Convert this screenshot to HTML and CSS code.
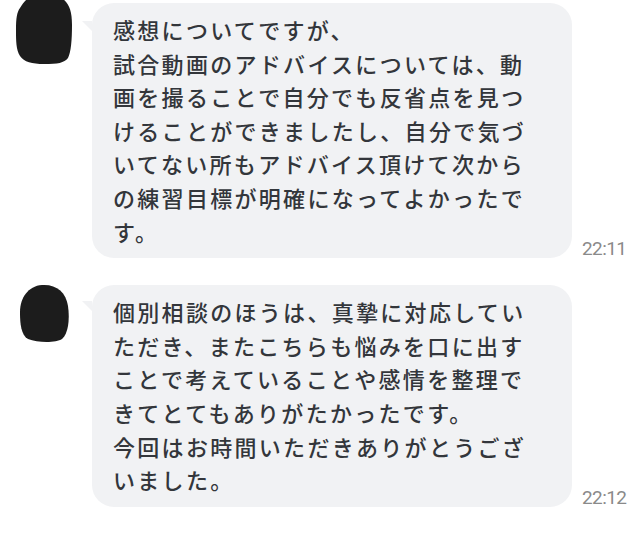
FILE: index.html
```html
<!DOCTYPE html>
<html lang="ja">
<head>
<meta charset="utf-8">
<link rel="stylesheet" href="styles.css">
</head>
<body>
<div class="chat">
  <div class="msg msg-first">
    <div class="avatar-col">
      <svg class="avatar avatar-1" width="60" height="66" viewBox="0 0 60 66">
        <path d="M14,-2 C22,-2 40,-2 48,-2 C55,4 58,10 58,25 C58,40 57,52 54,58 C50,63 44,64 30,64 C18,64 10,62 6,56 C2,50 2,40 2,30 C2,18 3,12 6,8 C9,3 12,0 14,-2 Z"/>
      </svg>
    </div>
    <div class="bubble bubble-first">感想についてですが、<br>試合動画のアドバイスについては、動<br>画を撮ることで自分でも反省点を見つ<br>けることができましたし、自分で気づ<br>いてない所もアドバイス頂けて次から<br>の練習目標が明確になってよかったで<br>す。</div>
    <div class="time">22:11</div>
  </div>
  <div class="msg msg-second">
    <div class="avatar-col">
      <svg class="avatar avatar-2" width="52" height="60" viewBox="0 0 52 60">
        <path d="M24,1 C38,0 48,8 50,22 C52,36 50,50 44,55 C38,59 20,59 10,55 C3,51 2,40 2,28 C2,14 10,2 24,1 Z"/>
      </svg>
    </div>
    <div class="bubble bubble-second">個別相談のほうは、真摯に対応してい<br>ただき、またこちらも悩みを口に出す<br>ことで考えていることや感情を整理で<br>きてとてもありがたかったです。<br>今回はお時間いただきありがとうござ<br>いました。</div>
    <div class="time">22:12</div>
  </div>
</div>
</body>
</html>
```
FILE: styles.css
```css
html, body {
  margin: 0;
  padding: 0;
  background: #ffffff;
}

.chat {
  display: flex;
  flex-direction: column;
}

.msg {
  display: flex;
  align-items: flex-start;
}

.msg-second {
  margin-top: 27px;
}

.avatar-col {
  width: 92px;
  flex: none;
}

.avatar {
  display: block;
  fill: #1c1c1c;
}

.avatar-1 {
  margin-left: 14px;
}

.avatar-2 {
  margin-left: 18px;
  margin-top: -1px;
}

.bubble {
  position: relative;
  width: 480px;
  box-sizing: border-box;
  flex: none;
  background: #f1f2f4;
  border-radius: 22px;
  padding: 10px 10px 10px 21px;
  font-family: "Noto Sans CJK JP", "Noto Sans", sans-serif;
  font-weight: 500;
  font-size: 22px;
  letter-spacing: 2.3px;
  line-height: 33.6px;
  color: #33363b;
  white-space: nowrap;
}

.bubble::before {
  content: "";
  position: absolute;
  left: -10px;
  top: 18px;
  width: 0;
  height: 0;
  border-top: 10px solid #f1f2f4;
  border-left: 10px solid transparent;
}

.bubble-first {
  margin-top: 3px;
}

.bubble-second::before {
  top: 16px;
}

.time {
  align-self: flex-end;
  margin-left: 10px;
  margin-bottom: -2px;
  font-family: Roboto, "Liberation Sans", sans-serif;
  font-size: 19px;
  letter-spacing: -0.6px;
  color: #8a8a8a;
  line-height: 22px;
}
```
